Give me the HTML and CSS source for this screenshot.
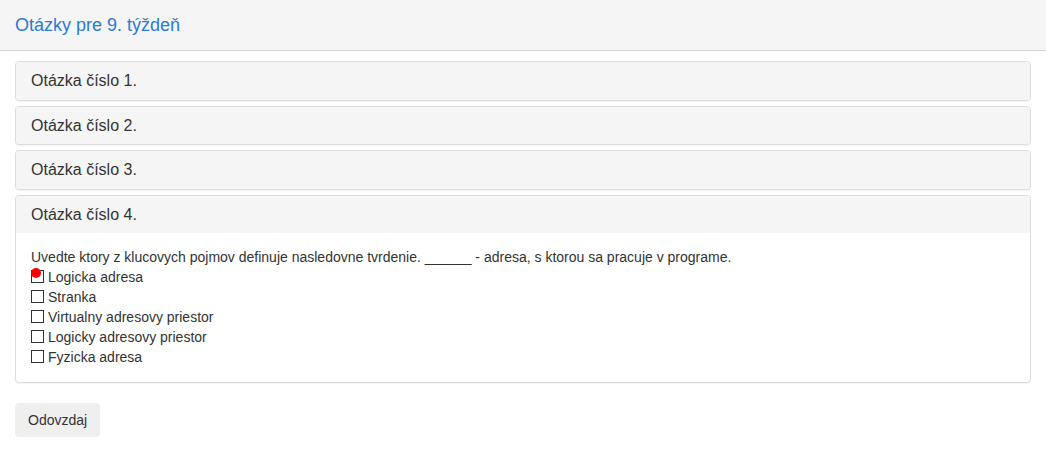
FILE: index.html
```html
<!DOCTYPE html>
<html>
<head>
<meta charset="utf-8">
<link rel="stylesheet" href="styles.css">
</head>
<body>
<header class="topbar">
  <h1 class="title">Otázky pre 9. týždeň</h1>
</header>
<main class="content">
  <div class="panel-group">
    <div class="panel"><div class="panel-heading">Otázka číslo 1.</div></div>
    <div class="panel"><div class="panel-heading">Otázka číslo 2.</div></div>
    <div class="panel"><div class="panel-heading">Otázka číslo 3.</div></div>
    <div class="panel">
      <div class="panel-heading">Otázka číslo 4.</div>
      <div class="panel-body">
        <div class="question">Uvedte ktory z klucovych pojmov definuje nasledovne tvrdenie. ______ - adresa, s ktorou sa pracuje v programe.</div>
        <label class="option"><span class="box"><span class="dot"></span></span>Logicka adresa</label>
        <label class="option"><span class="box"></span>Stranka</label>
        <label class="option"><span class="box"></span>Virtualny adresovy priestor</label>
        <label class="option"><span class="box"></span>Logicky adresovy priestor</label>
        <label class="option"><span class="box"></span>Fyzicka adresa</label>
      </div>
    </div>
  </div>
  <button class="btn">Odovzdaj</button>
</main>
</body>
</html>
```
FILE: styles.css
```css
* { box-sizing: border-box; }
html, body { margin: 0; padding: 0; background: #fff; }
body {
  font-family: "Liberation Sans", Arial, sans-serif;
  font-size: 14px;
  line-height: 20px;
  color: #333;
}
.topbar {
  height: 51px;
  background: #f5f5f5;
  border-bottom: 1px solid #d3d3d3;
  padding: 0 15px;
  display: flex;
  align-items: center;
}
.title {
  margin: 0;
  font-size: 18px;
  font-weight: normal;
  color: #2a7ad5;
  line-height: 20px;
}
.content {
  padding: 10px 15px;
}
.panel-group {
  display: flex;
  flex-direction: column;
  gap: 5px;
}
.panel {
  border: 1px solid #ddd;
  border-radius: 4px;
  background: #fff;
  box-shadow: 0 1px 1px rgba(0,0,0,0.05);
  overflow: hidden;
}
.panel-heading {
  background: #f5f5f5;
  padding: 9px 15px 9.6px;
  font-size: 16px;
  line-height: 19px;
  color: #333;
}
.panel-body {
  padding: 13.5px 15px 15px;
}
.option {
  display: flex;
  align-items: center;
}
.box {
  position: relative;
  width: 13px;
  height: 13px;
  border: 1px solid #333;
  background: #fff;
  margin-right: 4px;
  flex: none;
}
.dot {
  position: absolute;
  left: -1px;
  top: -3px;
  width: 10px;
  height: 10px;
  border-radius: 50%;
  background: #f00;
}
.btn {
  margin-top: 20px;
  height: 34px;
  padding: 0 12px;
  border: 1px solid #eee;
  border-radius: 4px;
  background: #efefef;
  font-family: "Liberation Sans", Arial, sans-serif;
  font-size: 14px;
  color: #333;
}
```
